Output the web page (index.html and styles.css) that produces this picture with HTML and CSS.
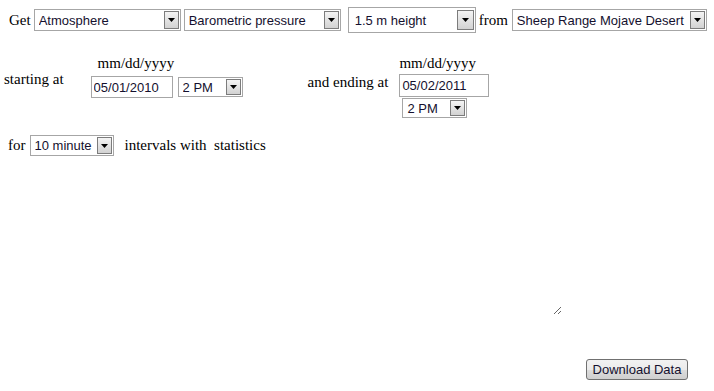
FILE: index.html
```html
<!DOCTYPE html>
<html lang="en">
<head>
    <meta charset="UTF-8">
    <title>Download Data</title>
    <link rel="stylesheet" href="styles.css">
</head>
<body>
    <form id="query-form">
        <!-- what to get -->
        <div class="row row-get">
            <span class="word">Get</span>
            <span class="combo w-cat">
                <select name="category"><option>Atmosphere</option></select>
                <span class="arrow"><svg width="7" height="4" viewBox="0 0 7 4"><path d="M0 0h7L3.5 4z"/></svg></span>
            </span>
            <span class="combo w-var">
                <select name="variable"><option>Barometric pressure</option></select>
                <span class="arrow"><svg width="7" height="4" viewBox="0 0 7 4"><path d="M0 0h7L3.5 4z"/></svg></span>
            </span>
            <span class="combo w-height tall">
                <select name="height"><option>1.5 m height</option></select>
                <span class="arrow"><svg width="7" height="4" viewBox="0 0 7 4"><path d="M0 0h7L3.5 4z"/></svg></span>
            </span>
            <span class="word">from</span>
            <span class="combo w-site">
                <select name="site"><option>Sheep Range Mojave Desert</option></select>
                <span class="arrow"><svg width="7" height="4" viewBox="0 0 7 4"><path d="M0 0h7L3.5 4z"/></svg></span>
            </span>
        </div>

        <!-- date range -->
        <div class="row row-dates">
            <span class="word start-label">starting at</span>
            <div class="when when-start">
                <div class="fmt">mm/dd/yyyy</div>
                <div class="when-inputs">
                    <input type="text" class="date date-start" value="05/01/2010">
                    <span class="combo w-hour">
                        <select name="start_hour"><option>2 PM</option></select>
                        <span class="arrow"><svg width="7" height="4" viewBox="0 0 7 4"><path d="M0 0h7L3.5 4z"/></svg></span>
                    </span>
                </div>
            </div>
            <span class="word end-label">and ending at</span>
            <div class="when when-end">
                <div class="fmt">mm/dd/yyyy</div>
                <input type="text" class="date date-end" value="05/02/2011">
                <span class="combo w-hour hour-end">
                    <select name="end_hour"><option>2 PM</option></select>
                    <span class="arrow"><svg width="7" height="4" viewBox="0 0 7 4"><path d="M0 0h7L3.5 4z"/></svg></span>
                </span>
            </div>
        </div>

        <!-- interval -->
        <div class="row row-interval">
            <span class="word">for</span>
            <span class="combo w-int">
                <select name="interval"><option>10 minute</option></select>
                <span class="arrow"><svg width="7" height="4" viewBox="0 0 7 4"><path d="M0 0h7L3.5 4z"/></svg></span>
            </span>
            <span class="word">intervals with &nbsp;statistics</span>
        </div>

        <textarea class="notes" name="notes"></textarea>

        <div class="actions">
            <button type="submit" class="btn">Download Data</button>
        </div>
    </form>
</body>
</html>
```

FILE: styles.css
```css
body {
    margin: 0;
    font-family: "Liberation Serif", "Times New Roman", serif;
    font-size: 15px;
    line-height: 17px;
    color: #000;
}

.row {
    display: flex;
}

.word {
    white-space: nowrap;
}

/* first line: Get ... from ... */
.row-get {
    align-items: center;
    padding: 8px 0 0 9px;
    height: 24px;
    gap: 3px;
}
.row-get .w-height {
    margin-left: 4px;
}
.row-get .w-site {
    margin-left: 1px;
}

/* fake old-style combo boxes */
.combo {
    position: relative;
    display: inline-block;
    flex: none;
}
.combo select {
    -webkit-appearance: none;
    appearance: none;
    display: block;
    width: 100%;
    height: 22px;
    margin: 0;
    padding: 0 0 0 4px;
    border: 1px solid #a6a6a6;
    border-radius: 0;
    background: #fff;
    font-family: "Liberation Sans", Arial, sans-serif;
    font-size: 13px;
    color: #14102e;
    outline: none;
}
.combo .arrow {
    position: absolute;
    top: 2px;
    right: 2px;
    bottom: 2px;
    width: 15px;
    box-sizing: border-box;
    border: 1px solid #7c7c7c;
    background: linear-gradient(#f4f4f4, #d2d2d2);
    display: flex;
    align-items: center;
    justify-content: center;
    pointer-events: none;
}
.combo .arrow svg {
    fill: #000;
}

.w-cat { width: 147px; }
.w-var { width: 157px; }
.w-height { width: 128px; }
.w-site { width: 195px; }
.w-hour { width: 65px; }
.w-int { width: 84px; }

.tall select {
    height: 26px;
    padding-left: 6px;
}
.tall .arrow {
    top: 3px;
    bottom: 3px;
    width: 17px;
}

.w-hour select {
    height: 20px;
}
.w-int select {
    height: 21px;
}

/* dates */
.row-dates {
    align-items: flex-start;
    margin-top: 23px;
    padding-left: 4px;
}
.start-label {
    margin-top: 16px;
}
.end-label {
    margin: 19px 0 0 65px;
}
.when-start {
    margin-left: 27px;
}
.when-start .fmt {
    padding-left: 7px;
}
.when-inputs {
    display: flex;
    align-items: center;
    gap: 5px;
    margin-top: 4px;
}
.when-end {
    margin-left: 11px;
}
.when-end .date {
    margin-top: 2px;
    width: 90px;
    height: 23px;
}
.hour-end {
    display: block;
    margin: 1px 0 0 3px;
}

.date {
    display: block;
    box-sizing: border-box;
    width: 82px;
    height: 22px;
    margin: 0;
    padding: 0 0 0 2px;
    border: 1px solid #a6a6a6;
    font-family: "Liberation Sans", Arial, sans-serif;
    font-size: 13px;
    color: #14102e;
    outline: none;
}

/* interval */
.row-interval {
    align-items: center;
    gap: 4px;
    margin-top: 17px;
    padding-left: 8px;
}
.row-interval .w-int {
    margin-right: 7px;
}

/* notes box, only its grip shows */
.notes {
    display: block;
    box-sizing: border-box;
    width: 554px;
    height: 149px;
    margin: 10px 0 0 8px;
    border: none;
    background: transparent;
    outline: none;
}

.actions {
    display: flex;
    justify-content: flex-end;
    padding-right: 26px;
    margin-top: 44px;
}
.btn {
    height: 21px;
    width: 102px;
    padding: 0;
    border: 1px solid #707070;
    border-radius: 3px;
    background: linear-gradient(#f2f2f2 0%, #ebebeb 50%, #dddddd 51%, #cfcfcf 100%);
    font-family: "Liberation Sans", Arial, sans-serif;
    font-size: 13px;
    color: #14102e;
}
```
